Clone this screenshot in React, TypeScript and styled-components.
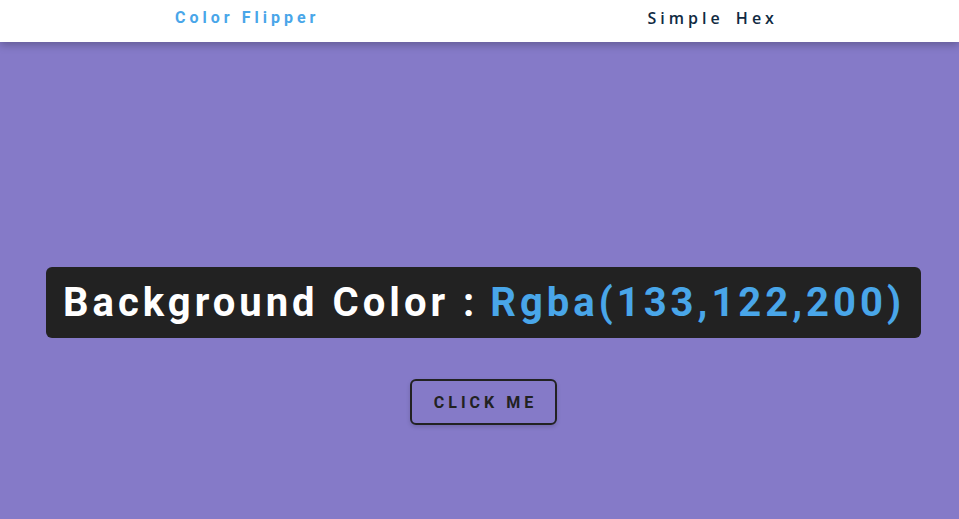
import React from "react";
import styled, { createGlobalStyle } from "styled-components";

const Global = createGlobalStyle`
  html, body { margin: 0; padding: 0; }
  body {
    background: rgb(133, 122, 200);
    font-family: Roboto, "Liberation Sans", sans-serif;
    min-height: 519px;
  }
`;

const Nav = styled.nav`
  height: 42px;
  background: #ffffff;
  box-shadow: 0 3px 8px rgba(0, 0, 0, 0.25);
  display: flex;
  justify-content: space-around;
  align-items: flex-start;
  padding: 0 17px 0 11px;
  box-sizing: border-box;
`;

const Logo = styled.h4`
  margin: 0;
  padding-top: 8px;
  font-family: Roboto, "Liberation Sans", sans-serif;
  font-weight: 700;
  font-size: 16px;
  line-height: 20px;
  letter-spacing: 4px;
  color: #49a6e9;
`;

const NavLink = styled.a`
  display: block;
  padding-top: 8px;
  font-family: "Open Sans", "Liberation Sans", sans-serif;
  font-size: 16px;
  font-weight: 600;
  line-height: 20px;
  letter-spacing: 4px;
  color: #102a42;
  text-decoration: none;
  word-spacing: 4px;
`;

const Main = styled.main`
  display: flex;
  flex-direction: column;
  align-items: center;
  padding: 225px 0 0 8px;
`;

const Heading = styled.h2`
  margin: 0 0 41px;
  background: #222222;
  color: #ffffff;
  border-radius: 6px;
  padding: 0 16px 0 17px;
  height: 71px;
  display: flex;
  align-items: center;
  font-family: Roboto, "Liberation Sans", sans-serif;
  font-weight: 700;
  font-size: 40px;
  letter-spacing: 4px;
  white-space: nowrap;
`;

const ColorValue = styled.span`
  color: #49a6e9;
  margin-left: 12px;
`;

const Button = styled.button`
  width: 147px;
  height: 46px;
  background: transparent;
  border: 2px solid #222222;
  border-radius: 6px;
  font-family: Roboto, "Liberation Sans", sans-serif;
  font-weight: 700;
  font-size: 16px;
  letter-spacing: 4px;
  text-transform: uppercase;
  color: #222222;
  cursor: pointer;
  padding: 0 0 0 4px;
  box-shadow: 0 2px 4px rgba(0, 0, 0, 0.15);
`;

export default function App() {
  return (
    <>
      <Global />
      <Nav>
        <Logo>Color Flipper</Logo>
        <NavLink href="#">Simple Hex</NavLink>
      </Nav>
      <Main>
        <Heading>
          Background Color :<ColorValue>Rgba(133,122,200)</ColorValue>
        </Heading>
        <Button>click me</Button>
      </Main>
    </>
  );
}
